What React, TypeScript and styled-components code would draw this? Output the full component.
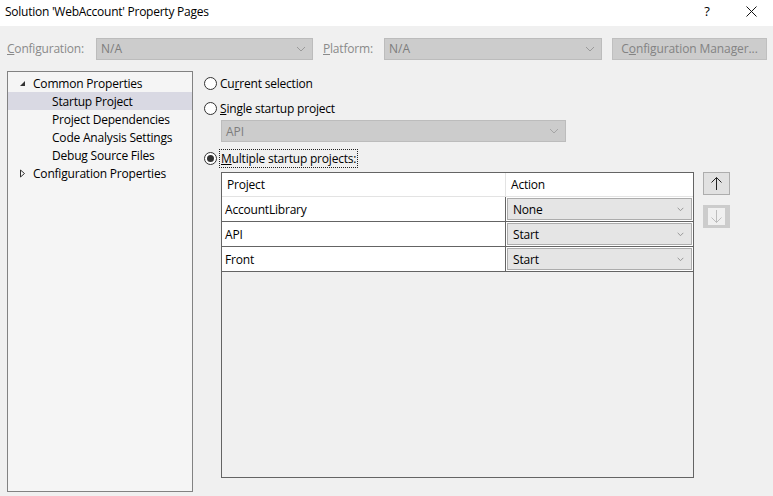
import React from 'react';
import styled, { createGlobalStyle } from 'styled-components';

const GlobalStyle = createGlobalStyle`
  html, body {
    margin: 0;
    padding: 0;
    background: #f0f0f0;
  }
  body {
    font-family: 'Open Sans', 'Noto Sans', sans-serif;
    font-size: 12px;
    color: #000;
  }
`;

const Window = styled.div`
  width: 773px;
  height: 496px;
  background: #f0f0f0;
  display: flex;
  flex-direction: column;
  overflow: hidden;
`;

const TitleBar = styled.div`
  height: 26px;
  background: #fff;
  display: flex;
  align-items: center;
  padding-left: 5px;
  font-size: 12px;
  letter-spacing: -0.25px;
  .title {
    flex: 1;
    margin-top: -4px;
  }
`;

const TitleButton = styled.span`
  width: 44px;
  display: flex;
  justify-content: center;
  margin-top: -4px;
  font-size: 13px;
`;

const Toolbar = styled.div`
  height: 45px;
  display: flex;
  align-items: center;
  padding: 0 6px 0 7px;
`;

const Label = styled.span<{ w: number }>`
  width: ${(p) => p.w}px;
  color: #8a8a8a;
  letter-spacing: -0.2px;
  u {
    text-decoration: underline;
  }
`;

const Combo = styled.div<{ w: number }>`
  width: ${(p) => p.w}px;
  height: 22px;
  box-sizing: border-box;
  background: #cccccc;
  border: 1px solid #bcbcbc;
  display: flex;
  align-items: center;
  justify-content: space-between;
  padding: 0 6px 0 4px;
  color: #7c7c7c;
  margin-right: 10px;
`;

const Chevron = ({ color = '#9a9a9a', size = 10 }: { color?: string; size?: number }) => (
  <svg width={size} height={size / 2 + 1} viewBox="0 0 10 6">
    <path d="M1 1 L5 5 L9 1" fill="none" stroke={color} strokeWidth="1" />
  </svg>
);

const ManagerButton = styled.div`
  width: 155px;
  height: 22px;
  box-sizing: border-box;
  border: 1px solid #bfbfbf;
  background: #cccccc;
  color: #838383;
  display: flex;
  align-items: center;
  justify-content: center;
  letter-spacing: -0.1px;
`;

const Body = styled.div`
  display: flex;
  padding: 0 0 0 7px;
  flex: 1;
`;

const Tree = styled.div`
  width: 186px;
  height: 421px;
  box-sizing: border-box;
  border: 1px solid #828282;
  background: #f5f5f5;
  padding-top: 2px;
`;

const TreeRow = styled.div<{ level: number; selected?: boolean }>`
  height: 18px;
  display: flex;
  align-items: center;
  padding-left: ${(p) => (p.level === 0 ? 11 : 44)}px;
  background: ${(p) => (p.selected ? '#d9d9e3' : 'transparent')};
  letter-spacing: -0.2px;
  white-space: nowrap;
`;

const Expander = styled.span`
  width: 14px;
  display: inline-flex;
  align-items: center;
`;

const Right = styled.div`
  flex: 1;
  padding-left: 11px;
  padding-top: 3px;
`;

const RadioRow = styled.div<{ mt?: number }>`
  display: flex;
  align-items: center;
  height: 18px;
  margin-top: ${(p) => p.mt || 0}px;
  letter-spacing: -0.2px;
`;

const RadioCircle = styled.span<{ checked?: boolean }>`
  width: 13px;
  height: 13px;
  box-sizing: border-box;
  border-radius: 50%;
  border: 1px solid #333;
  background: #fff;
  margin-right: 3px;
  display: inline-flex;
  align-items: center;
  justify-content: center;
  &::after {
    content: '';
    display: ${(p) => (p.checked ? 'block' : 'none')};
    width: 7px;
    height: 7px;
    border-radius: 50%;
    background: #333;
  }
`;

const Focus = styled.span`
  outline: 1px dotted #222;
  outline-offset: 0px;
  padding: 0 1px;
`;

const SubCombo = styled.div`
  margin: 3px 0 0 17px;
`;

const GridArea = styled.div`
  display: flex;
  margin: 5px 0 0 17px;
`;

const Grid = styled.div`
  width: 473px;
  height: 306px;
  box-sizing: border-box;
  border: 1px solid #646464;
  background: #f0f0f0;
`;

const GridRow = styled.div<{ header?: boolean }>`
  display: flex;
  height: ${(p) => (p.header ? 23 : 24)}px;
  border-bottom: 1px solid ${(p) => (p.header ? '#e3e3e3' : '#646464')};
  background: #fff;
`;

const Cell = styled.div<{ w?: number; header?: boolean }>`
  width: ${(p) => (p.w ? `${p.w}px` : 'auto')};
  flex: ${(p) => (p.w ? 'none' : '1')};
  box-sizing: border-box;
  display: flex;
  align-items: center;
  padding-left: ${(p) => (p.header ? 5 : 3)}px;
  border-right: 1px solid ${(p) => (p.header ? '#e3e3e3' : '#646464')};
  letter-spacing: -0.2px;
  &:last-child {
    border-right: none;
    padding: 0 1px;
  }
`;

const ActionSelect = styled.div`
  flex: 1;
  height: 22px;
  box-sizing: border-box;
  border: 1px solid #acacac;
  background: #e5e5e5;
  display: flex;
  align-items: center;
  justify-content: space-between;
  padding: 0 7px 0 5px;
  letter-spacing: -0.2px;
`;

const HeaderAction = styled.div`
  padding-left: 4px;
`;

const SideButtons = styled.div`
  display: flex;
  flex-direction: column;
  gap: 10px;
  margin-left: 9px;
`;

const ArrowButton = styled.div<{ disabled?: boolean }>`
  width: 27px;
  height: 23px;
  box-sizing: border-box;
  border: 1px solid ${(p) => (p.disabled ? '#cccccc' : '#adadad')};
  background: ${(p) => (p.disabled ? '#cccccc' : '#e1e1e1')};
  display: flex;
  align-items: center;
  justify-content: center;
  .inner {
    width: 17px;
    height: 17px;
    display: flex;
    align-items: center;
    justify-content: center;
    background: ${(p) => (p.disabled ? '#f0f0f0' : 'transparent')};
  }
`;

const Arrow = ({ up, color }: { up?: boolean; color: string }) => (
  <svg width="13" height="15" viewBox="0 0 13 15">
    {up ? (
      <path d="M6.5 14 V1.5 M1.5 6.5 L6.5 1.5 L11.5 6.5" fill="none" stroke={color} strokeWidth="1" />
    ) : (
      <path d="M6.5 1 V13.5 M1.5 8.5 L6.5 13.5 L11.5 8.5" fill="none" stroke={color} strokeWidth="1" />
    )}
  </svg>
);

const projects = [
  { name: 'AccountLibrary', action: 'None' },
  { name: 'API', action: 'Start' },
  { name: 'Front', action: 'Start' },
];

export default function App() {
  return (
    <Window>
      <GlobalStyle />
      <TitleBar>
        <span className="title">Solution 'WebAccount' Property Pages</span>
        <TitleButton>?</TitleButton>
        <TitleButton>
          <svg width="11" height="11" viewBox="0 0 11 11">
            <path d="M0.5 0.5 L10.5 10.5 M10.5 0.5 L0.5 10.5" stroke="#111" strokeWidth="1" />
          </svg>
        </TitleButton>
      </TitleBar>
      <Toolbar>
        <Label w={89}>
          <u>C</u>onfiguration:
        </Label>
        <Combo w={217}>
          <span>N/A</span>
          <Chevron />
        </Combo>
        <Label w={61}>
          <u>P</u>latform:
        </Label>
        <Combo w={218}>
          <span>N/A</span>
          <Chevron />
        </Combo>
        <ManagerButton>
          C<u>o</u>nfiguration Manager...
        </ManagerButton>
      </Toolbar>
      <Body>
        <Tree>
          <TreeRow level={0}>
            <Expander>
              <svg width="7" height="7" viewBox="0 0 7 7">
                <path d="M6 1 L6 6 L1 6 Z" fill="#333" />
              </svg>
            </Expander>
            Common Properties
          </TreeRow>
          <TreeRow level={1} selected>
            Startup Project
          </TreeRow>
          <TreeRow level={1}>Project Dependencies</TreeRow>
          <TreeRow level={1}>Code Analysis Settings</TreeRow>
          <TreeRow level={1}>Debug Source Files</TreeRow>
          <TreeRow level={0}>
            <Expander>
              <svg width="7" height="9" viewBox="0 0 7 9">
                <path d="M1.5 1 L5.5 4.5 L1.5 8 Z" fill="none" stroke="#333" strokeWidth="1" />
              </svg>
            </Expander>
            Configuration Properties
          </TreeRow>
        </Tree>
        <Right>
          <RadioRow>
            <RadioCircle />
            <span>
              Cu<u>r</u>rent selection
            </span>
          </RadioRow>
          <RadioRow mt={7}>
            <RadioCircle />
            <span>
              <u>S</u>ingle startup project
            </span>
          </RadioRow>
          <SubCombo>
            <Combo w={345}>
              <span>API</span>
              <Chevron color="#a5a5a5" />
            </Combo>
          </SubCombo>
          <RadioRow mt={7}>
            <RadioCircle checked />
            <Focus>
              <u>M</u>ultiple startup projects:
            </Focus>
          </RadioRow>
          <GridArea>
            <Grid>
              <GridRow header>
                <Cell w={284} header>
                  Project
                </Cell>
                <Cell header>
                  <HeaderAction>Action</HeaderAction>
                </Cell>
              </GridRow>
              {projects.map((p) => (
                <GridRow key={p.name}>
                  <Cell w={284}>{p.name}</Cell>
                  <Cell>
                    <ActionSelect>
                      <span>{p.action}</span>
                      <Chevron color="#777" size={7} />
                    </ActionSelect>
                  </Cell>
                </GridRow>
              ))}
            </Grid>
            <SideButtons>
              <ArrowButton>
                <div className="inner">
                  <Arrow up color="#222" />
                </div>
              </ArrowButton>
              <ArrowButton disabled>
                <div className="inner">
                  <Arrow color="#bdbdbd" />
                </div>
              </ArrowButton>
            </SideButtons>
          </GridArea>
        </Right>
      </Body>
    </Window>
  );
}
